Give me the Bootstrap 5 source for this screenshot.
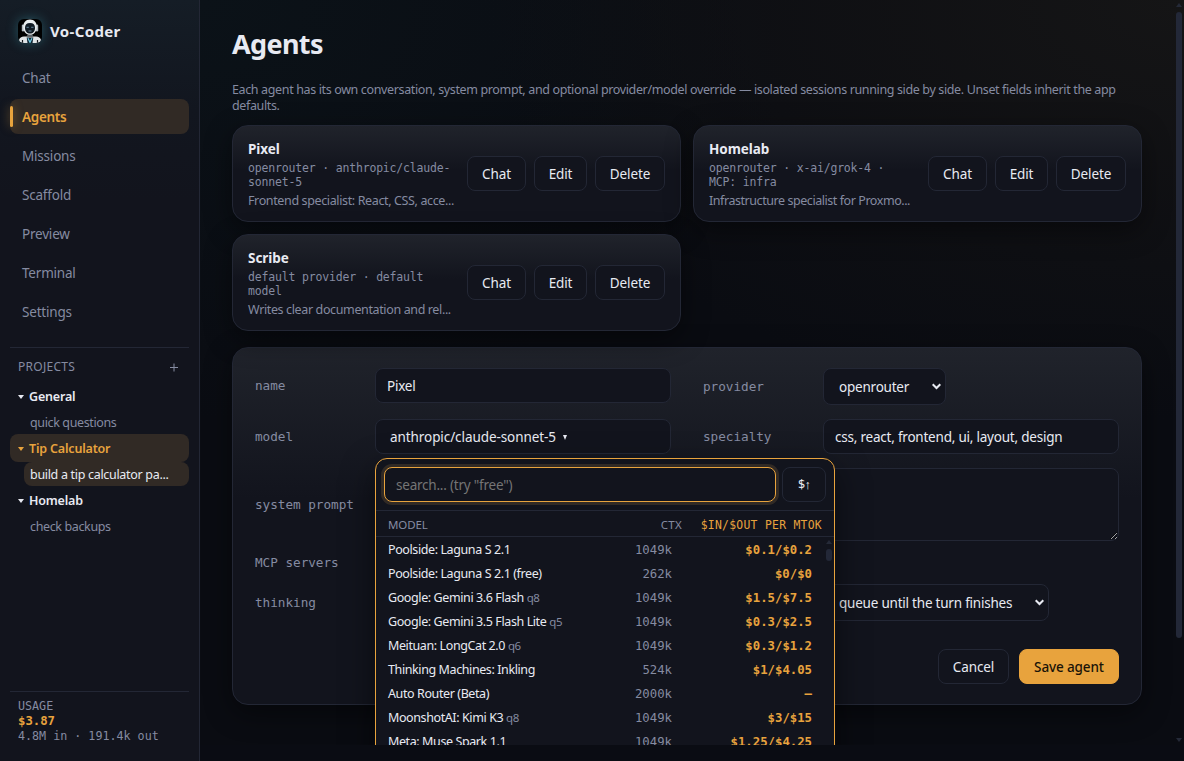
<!doctype html>
<html lang="en" data-bs-theme="dark">
<head>
<meta charset="utf-8">
<title>Vo-Coder</title>
<link href="https://cdn.jsdelivr.net/npm/bootstrap@5.3.0/dist/css/bootstrap.min.css" rel="stylesheet">
<style>
:root{--amber:#e8a33d;--line:#232735;--panel:#12141d;--dim:#858ba1;--ink:#e8eaf2;--mono:"DejaVu Sans Mono",monospace}
body{font:400 13.5px/18px "Noto Sans",sans-serif;letter-spacing:-.2px;color:var(--ink);background:#0a0c13;height:761px;overflow:hidden}
.mono{font-family:var(--mono)}
.amber{color:var(--amber)}
.dim{color:var(--dim)}
.side{width:200px;height:761px;padding:10px;border-right:1px solid var(--line);background:linear-gradient(180deg,#151d26 0,#12161f 110px,#12141d 200px)}
.brand-row{height:44px;padding:0 8px;margin-bottom:6px;gap:8px;font-weight:700;font-size:15px;letter-spacing:.36px;line-height:20px}
.brand-row span{margin-top:-2px}
.bot{width:24px;height:24px;margin-top:-2px;border-radius:6px;box-shadow:0 0 12px rgba(70,190,205,.35);background:#000}
.tab{height:35px;padding:0 12px;border-radius:8px;color:var(--dim);margin-bottom:4px;display:flex;align-items:center;text-decoration:none}
.tab.on{background:#312a25;color:var(--amber);font-weight:600;position:relative;letter-spacing:-.3px}
.tab.on::before{content:"";position:absolute;left:0;top:7px;width:3px;height:21px;border-radius:2px;background:var(--amber);box-shadow:0 0 10px rgba(232,163,61,.5)}
.projects{border-top:1px solid var(--line);margin-top:14px;font-size:12.5px;letter-spacing:-.37px}
.proj-head{height:34px;padding:4px 9px 0 8px;font-size:12px;letter-spacing:.28px;color:var(--dim)}
.proj{height:28px;padding:2px 8px 0;border-radius:8px;font-weight:600;gap:5px;letter-spacing:-.18px}
.proj.on,.thread.on{background:#312a25}
.thread{height:24px;margin-left:14px;padding:1px 6px 0;line-height:24px;border-radius:8px;color:var(--dim);white-space:nowrap}
.thread.on{color:var(--ink);letter-spacing:-.31px}
.tri{width:0;height:0;border:3.5px solid transparent;border-top:4px solid currentColor;border-bottom:0}
.usage{border-top:1px solid var(--line);height:60px;padding:7px 8px 0;font:11.7px/14px var(--mono);letter-spacing:0;color:var(--dim)}
.page{width:984px;height:745px;overflow:hidden;position:relative;padding:27px 42px 0 32px;background:radial-gradient(700px 420px at 100% 0,#151516 0,rgba(18,18,20,.75) 45%,transparent 100%),radial-gradient(600px 420px at 0 0,#0b1218 0,transparent 100%),#0a0c12}
h1{font-size:27px;font-weight:700;line-height:34px;letter-spacing:-.65px;margin:0 0 21px;color:var(--ink)}
.intro{font-size:12.5px;line-height:16px;letter-spacing:-.365px;color:var(--dim);margin:0 0 11px}
.agents{display:grid;grid-template-columns:449px 449px;gap:12px}
.panel{border:1px solid var(--line);border-radius:16px;background:linear-gradient(180deg,#20232b 0,#12141d 44px);box-shadow:0 8px 28px rgba(0,0,0,.45)}
.agent{height:97px;padding:12px 15px;gap:12px}
.agent-text{width:207px}
.agent-name{font-weight:700;line-height:20px;letter-spacing:-.04px}
.agent-meta{font:11.5px/14px var(--mono);letter-spacing:-.18px;color:var(--dim);margin:2px 0 3px}
.agent-desc{font-size:12.5px;line-height:17px;letter-spacing:-.37px;color:var(--dim);white-space:nowrap}
.key{height:35px;border:1px solid var(--line);border-radius:8px;background:var(--panel);color:var(--ink);font:inherit;letter-spacing:-.12px;padding:1px 0 0;display:flex;align-items:center;justify-content:center}
.key-save{width:100px;background:var(--amber);border-color:var(--amber);color:#1a1408;font-weight:500}
.editor{height:358px;width:910px;margin-top:16px;padding:20px 22px;background:linear-gradient(180deg,#20232b 0,#12141d 150px)}
.fields{display:grid;grid-template-columns:120px 296px 32px 120px 296px;grid-template-rows:51px 49px 95px 21px 59px;align-items:start}
.lab{font:12.7px/35px var(--mono);letter-spacing:-.03px;color:var(--dim)}
.field{height:35px;border:1px solid var(--line);border-radius:8px;background:var(--panel);color:var(--ink);padding:1px 11px 0;display:flex;align-items:center;width:100%;font:inherit;letter-spacing:-.22px}
.drop{height:37px;padding:0 4px 0 15px;justify-content:space-between;width:fit-content}
.area{height:73px;resize:both;display:block;outline:0}
.model-list{position:absolute;left:175px;top:458px;width:460px;height:330px;border:1px solid var(--amber);border-radius:12px;background:var(--panel);box-shadow:0 12px 32px rgba(0,0,0,.5)}
.finder{padding:8px 8px;gap:6px;height:52px;border-bottom:1px solid var(--line)}
.search{width:392px;border-color:var(--amber);box-shadow:0 0 0 3px #312a25;color:#757575}
.cols{display:grid;grid-template-columns:1fr 90px 140px;padding:0 12px;height:26px;line-height:27px;border-bottom:1px solid var(--line);font-size:11.5px;letter-spacing:-.1px;color:var(--dim)}
.cols>:nth-child(n+2),.model>:nth-child(n+2){text-align:right}
.cols>:nth-child(2){letter-spacing:.3px}
.cols .mono{letter-spacing:.28px;font-size:11.4px;line-height:28px}
.model{display:grid;grid-template-columns:1fr 90px 140px;padding:0 22px 0 12px;height:24px;line-height:26px;font-size:12.5px;letter-spacing:-.4px;white-space:nowrap}
.model .mono{font-size:12.3px;letter-spacing:0}
.model small{font-size:11.5px;color:var(--dim)}
.model b{font-weight:700;color:var(--amber)}
.bar-thumb{position:absolute;background:#232838;border-radius:3px}
.bar-tip{position:absolute;width:0;height:0;border:3px solid transparent}
.bar-tip.up{border-top:0;border-bottom:4px solid #252a38}
.bar-tip.down{border-bottom:0;border-top:4px solid #252a38}
</style>
</head>
<body>
<div class="d-flex">
<aside class="side d-flex flex-column flex-shrink-0">
  <div class="brand-row d-flex align-items-center">
    <svg class="bot" viewBox="0 0 24 24"><path d="M1 24v-3q1-3.500 5-3.500h12q4 0 5 3.500v3z" fill="#dfe3e6"/><path d="M4.500 24v-3M19.500 24v-3" stroke="#15191d" stroke-width="1.200"/><rect x="3.800" y="5.500" width="2.400" height="7" rx="1.200" fill="#b4bcc2"/><rect x="17.800" y="5.500" width="2.400" height="7" rx="1.200" fill="#b4bcc2"/><path d="M12 .5c-4.500 0-6.800 3.200-6.800 7.500S8 15.800 12 15.800s6.800-3.500 6.800-7.800S16.500.5 12 .5z" fill="#e9edef"/><path d="M12 4c-3.500 0-5 1.600-5 4.800 0 3.600 2 5.800 5 5.800s5-2.200 5-5.800C17 5.600 15.500 4 12 4z" fill="#111b24"/><path d="M8.500 8.300h2.300M13.200 8.300h2.300M10.500 12h3" stroke="#6f93aa" stroke-width=".9"/><path d="M9 16h6l-.6 1.500H9.600z" fill="#5b646b"/><path d="M8.700 18.500h6.600L14.500 24h-5z" fill="#11222e"/><path d="M10 19.300l2 4 2-4" fill="none" stroke="#70c7e0" stroke-width="1.300"/></svg>
    <span>Vo-Coder</span>
  </div>
  <nav class="d-flex flex-column">
    <a class="tab">Chat</a><a class="tab on">Agents</a><a class="tab">Missions</a><a class="tab">Scaffold</a><a class="tab">Preview</a><a class="tab">Terminal</a><a class="tab">Settings</a>
  </nav>
  <section class="projects">
    <div class="proj-head d-flex justify-content-between align-items-center"><span>PROJECTS</span><svg width="11" height="11" viewBox="0 0 11 11" stroke="#858ba1"><path d="M1 5.500h8M5 1.500v8"/></svg></div>
    <div class="proj d-flex align-items-center"><i class="tri"></i>General</div>
    <div class="thread">quick questions</div>
    <div class="proj on amber d-flex align-items-center"><i class="tri"></i>Tip Calculator</div>
    <div class="thread on">build a tip calculator pa...</div>
    <div class="proj d-flex align-items-center"><i class="tri"></i>Homelab</div>
    <div class="thread">check backups</div>
  </section>
  <div class="usage mt-auto"><div>USAGE</div><div class="amber fw-bold" style="font-size:12.3px;line-height:16px">$3.87</div><div>4.8M in · 191.4k out</div></div>
</aside>
<main class="page">
  <h1>Agents</h1>
  <p class="intro">Each agent has its own conversation, system prompt, and optional provider/model override — isolated sessions running side by side. Unset fields inherit the app<br>defaults.</p>
  <div class="agents">
    <article class="panel agent d-flex align-items-center">
      <div class="agent-text"><div class="agent-name">Pixel</div><div class="agent-meta">openrouter · anthropic/claude-<br>sonnet-5</div><div class="agent-desc">Frontend specialist: React, CSS, acce...</div></div>
      <div class="d-flex gap-2"><button class="key" style="width:59px">Chat</button><button class="key" style="width:53px">Edit</button><button class="key" style="width:70px">Delete</button></div>
    </article>
    <article class="panel agent d-flex align-items-center">
      <div class="agent-text"><div class="agent-name">Homelab</div><div class="agent-meta">openrouter · x-ai/grok-4 ·<br>MCP: infra</div><div class="agent-desc" style="letter-spacing:-.44px">Infrastructure specialist for Proxmo...</div></div>
      <div class="d-flex gap-2"><button class="key" style="width:59px">Chat</button><button class="key" style="width:53px">Edit</button><button class="key" style="width:70px">Delete</button></div>
    </article>
    <article class="panel agent d-flex align-items-center">
      <div class="agent-text"><div class="agent-name">Scribe</div><div class="agent-meta">default provider · default<br>model</div><div class="agent-desc">Writes clear documentation and rel...</div></div>
      <div class="d-flex gap-2"><button class="key" style="width:59px">Chat</button><button class="key" style="width:53px">Edit</button><button class="key" style="width:70px">Delete</button></div>
    </article>
  </div>
  <section class="panel editor">
    <div class="fields">
      <div class="lab">name</div><div class="field">Pixel</div><span></span>
      <div class="lab" style="line-height:37px">provider</div>
      <div class="field drop" style="width:123px"><span>openrouter</span><svg width="9" height="7" viewBox="0 0 9 7" fill="none" stroke="#e8eaf2" stroke-width="2"><path d="M.7 1.2l3.800 3.800 3.800-3.800"/></svg></div>
      <div class="lab">model</div><div class="field" style="padding-left:14px;letter-spacing:-.08px"><span>anthropic/claude-sonnet-5</span><i class="tri" style="margin-left:7px;border-width:5px 2.7px 0"></i></div><span></span>
      <div class="lab">specialty</div><div class="field">css, react, frontend, ui, layout, design</div>
      <div class="lab" style="line-height:73px">system prompt</div><textarea class="field area" style="grid-column:2/6" spellcheck="false"></textarea>
      <div class="lab" style="line-height:0">MCP servers</div><span style="grid-column:2/6"></span>
      <div class="lab" style="line-height:37px">thinking</div><span></span><span></span><span></span><div class="field drop" style="width:226px"><span>queue until the turn finishes</span><svg width="9" height="7" viewBox="0 0 9 7" fill="none" stroke="#e8eaf2" stroke-width="2"><path d="M.7 1.2l3.800 3.800 3.800-3.800"/></svg></div>
    </div>
    <div class="d-flex justify-content-end" style="gap:10px;margin-top:6px"><button class="key" style="width:71px">Cancel</button><button class="key key-save">Save agent</button></div>
  </section>
  <div class="model-list">
    <div class="finder d-flex"><div class="field search">search... (try "free")</div><button class="key mono" style="width:44px;font-size:12.5px;letter-spacing:-.6px">$↑</button></div>
    <div class="cols"><span>MODEL</span><span>CTX</span><span class="mono amber">$IN/$OUT PER MTOK</span></div>
    <div class="model"><span>Poolside: Laguna S 2.1</span><span class="mono dim">1049k</span><b class="mono">$0.1/$0.2</b></div>
    <div class="model"><span>Poolside: Laguna S 2.1 (free)</span><span class="mono dim">262k</span><b class="mono">$0/$0</b></div>
    <div class="model"><span>Google: Gemini 3.6 Flash <small>q8</small></span><span class="mono dim">1049k</span><b class="mono">$1.5/$7.5</b></div>
    <div class="model"><span>Google: Gemini 3.5 Flash Lite <small>q5</small></span><span class="mono dim">1049k</span><b class="mono">$0.3/$2.5</b></div>
    <div class="model"><span>Meituan: LongCat 2.0 <small>q6</small></span><span class="mono dim">1049k</span><b class="mono">$0.3/$1.2</b></div>
    <div class="model"><span>Thinking Machines: Inkling</span><span class="mono dim">524k</span><b class="mono">$1/$4.05</b></div>
    <div class="model"><span>Auto Router (Beta)</span><span class="mono dim">2000k</span><b class="mono">—</b></div>
    <div class="model"><span>MoonshotAI: Kimi K3 <small>q8</small></span><span class="mono dim">1049k</span><b class="mono">$3/$15</b></div>
    <div class="model"><span>Meta: Muse Spark 1.1</span><span class="mono dim">1049k</span><b class="mono">$1.25/$4.25</b></div>
    <i class="bar-tip up" style="right:2px;top:81px"></i><i class="bar-thumb" style="right:2px;top:90px;width:6px;height:12px"></i>
  </div>
  <i class="bar-tip up" style="left:976px;top:3px"></i><i class="bar-thumb" style="left:976px;top:12px;width:6px;height:626px"></i><i class="bar-tip down" style="left:976px;top:738px"></i>
</main>
</div>
<script src="https://cdn.jsdelivr.net/npm/bootstrap@5.3.0/dist/js/bootstrap.bundle.min.js"></script>
</body>
</html>
